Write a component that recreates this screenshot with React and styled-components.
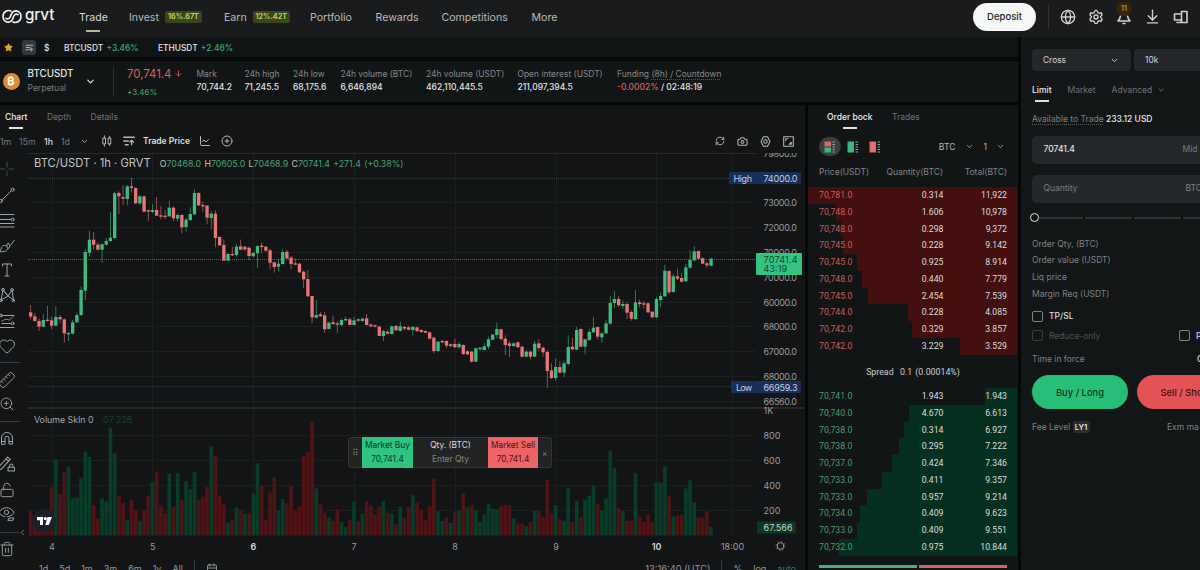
import styled, { createGlobalStyle } from "styled-components";
import {
  ArrowDown,
  ArrowDownToLine,
  Calendar,
  Camera,
  ChartLine,
  ChevronDown,
  ChevronLeft,
  CirclePlus,
  Eye,
  Globe,
  Heart,
  LockOpen,
  RefreshCw,
  Ruler,
  Settings,
  Star,
  Trash2,
  ZoomIn,
} from "lucide-react";

const GlobalStyle = createGlobalStyle`
  * { box-sizing: border-box; }
  body {
    margin: 0;
    background: #050607;
    color: #e4e5e5;
    font-family: Inter, "Liberation Sans", sans-serif;
    overflow: hidden;
  }
  svg { display: block; flex: none; }
`;

const Page = styled.div`
  width: 1200px;
  height: 570px;
  overflow: hidden;
  display: grid;
  grid-template-rows: 37px 533px;
  white-space: nowrap;
`;

/* header */

const Header = styled.header`
  background: #191b1c;
  display: flex;
  align-items: center;
  padding: 0 11px 4px 2px;
`;

const Logo = styled.div`
  display: flex;
  align-items: center;
  gap: 3px;
  width: 77px;
  font-size: 15.2px;
  font-weight: 500;
  line-height: 20px;
  letter-spacing: -0.1px;
  color: #f1f2f2;
`;

const LogoText = styled.span`
  transform: translateY(-2px);
`;

const Nav = styled.nav`
  display: grid;
  grid-template-columns: 50px 95px 86px 65.5px 66px 90px 60px;
  flex: 1;
`;

const NavItem = styled.a`
  display: flex;
  align-items: center;
  height: 33px;
  gap: 6px;
  padding-top: 1px;
  font-size: 10.6px;
  color: ${({ $active }) => ($active ? "#d6d8d8" : "#b9bbbc")};
  position: relative;

  &::after {
    content: "";
    display: ${({ $active }) => ($active ? "block" : "none")};
    position: absolute;
    left: 7px;
    bottom: 1px;
    width: 14px;
    height: 2px;
    background: #a9c28c;
  }
`;

const Badge = styled.span`
  height: 12px;
  line-height: 12px;
  width: 37px;
  text-align: center;
  border-radius: 2px;
  background: #3a4519;
  color: #b9cd6d;
  font-size: 7.2px;
  font-weight: 700;
  margin-top: -1px;
`;

const Deposit = styled.button`
  width: 63px;
  height: 28px;
  border: 0;
  border-radius: 14px;
  background: #f6f7f7;
  color: #222425;
  font: 500 9.5px Inter, sans-serif;
`;

const HeaderIcons = styled.div`
  display: flex;
  align-items: center;
  gap: 12px;
  margin-left: 12px;
  padding-left: 11px;
  height: 24px;
  border-left: 1px solid #303334;
  color: #cfd1d1;
`;

const Bell = styled.div`
  position: relative;
`;

const Count = styled.span`
  position: absolute;
  left: 0;
  top: -7px;
  width: 16px;
  height: 14px;
  border-radius: 7px;
  background: #362509;
  color: #c79431;
  font-size: 7px;
  font-weight: 600;
  line-height: 14px;
  text-align: center;
`;

/* layout under the header */

const Body = styled.main`
  display: grid;
  grid-template-columns: 1018px 1fr;
  gap: 3px;
`;

const Left = styled.div`
  display: grid;
  grid-template-rows: 20px 41px 465px;
  gap: 3.5px;
  min-width: 0;
`;

const Favourites = styled.div`
  background: #111415;
  display: flex;
  align-items: center;
  padding: 1px 0 0 4px;
  font-size: 8.4px;
  font-weight: 500;
`;

const Chip = styled.span`
  width: 14px;
  height: 15px;
  margin: 0 8px 0 9px;
  border-radius: 3px;
  background: #34393d;
  display: flex;
  align-items: center;
  justify-content: center;
`;

const Dollar = styled.span`
  width: 20px;
`;

const Pair = styled.span`
  width: 94px;

  em {
    font-style: normal;
    color: #3fa976;
    margin-left: 1px;
  }
`;

const Instrument = styled.section`
  background: #121516;
  display: flex;
  align-items: center;
`;

const Coin = styled.span`
  width: 17px;
  height: 17px;
  margin-left: 2.5px;
  border-radius: 50%;
  background: #e08c35;
  color: #fff;
  font-size: 11px;
  font-weight: 700;
  line-height: 17px;
  text-align: center;
`;

const Symbol = styled.div`
  margin-left: 8px;
  width: 57.5px;
  font-size: 9.8px;
  font-weight: 500;
  line-height: 14px;

  small {
    display: block;
    font-size: 8.5px;
    font-weight: 400;
    color: #7b7e80;
  }
`;

const LastPrice = styled.div`
  margin-left: 17px;
  padding-left: 13px;
  width: 83.5px;
  height: 29px;
  border-left: 1px solid #2b2e30;
  color: #d9605f;
  font-size: 11.4px;
  line-height: 14px;

  div {
    display: flex;
    align-items: center;
    gap: 3px;
  }

  small {
    display: block;
    margin-top: 4px;
    font-size: 8px;
    color: #3fa976;
  }
`;

const Stats = styled.div`
  display: grid;
  grid-template-columns: 48px 48.5px 47.5px 85.5px 91.5px 99.5px 120px;
`;

const Stat = styled.div`
  font-size: 8.5px;
  font-weight: 500;
  line-height: 13.5px;

  small {
    display: block;
    font-size: 8.45px;
    font-weight: 400;
    color: #85888a;
  }

  u {
    text-decoration: underline dotted #55585a;
    text-underline-offset: 2px;
  }

  em {
    font-style: normal;
    color: #d9605f;
  }
`;

const Work = styled.div`
  display: grid;
  grid-template-columns: 805px 210px;
  gap: 3px;
`;

/* chart panel */

const ChartPanel = styled.section`
  background: #121415;
  display: grid;
  grid-template-rows: 24px 24px 403px 14px;
  overflow: hidden;
`;

const Tabs = styled.div`
  display: flex;
  align-items: center;
  gap: ${({ $gap }) => $gap || 19.5}px;
  padding-left: ${({ $left }) => $left || 5}px;
`;

const Tab = styled.span`
  position: relative;
  font-size: 8.5px;
  font-weight: ${({ $active }) => ($active ? 500 : 400)};
  line-height: 24px;
  color: ${({ $active }) => ($active ? "#eceded" : "#6f7274")};

  &::after {
    content: "";
    display: ${({ $active }) => ($active ? "block" : "none")};
    position: absolute;
    left: calc(50% - 7px);
    bottom: 0;
    width: 14px;
    height: 1.6px;
    background: #dfe0e0;
  }
`;

const ChartTools = styled.div`
  display: flex;
  align-items: center;
  height: 24px;
  font-size: 8.8px;
  color: #b7b9ba;
`;

const Interval = styled.span`
  width: ${({ $w }) => $w}px;
  color: ${({ $active }) => ($active ? "#dedfe0" : "#76797b")};
  font-weight: ${({ $active }) => ($active ? 500 : 400)};
`;

const TradePrice = styled.b`
  font-size: 8.5px;
  font-weight: 600;
  color: #dddfdf;
  margin: 0 9px 0 8px;
`;

const RightTools = styled.div`
  display: flex;
  gap: 12px;
  margin-left: auto;
  padding-right: 11px;
`;

const ChartBody = styled.div`
  display: grid;
  grid-template-columns: 28px 777px;
  position: relative;
`;

const DrawTools = styled.div`
  display: flex;
  flex-direction: column;
  height: 403px;
  color: #a0a3a5;
`;

const DrawTool = styled.span`
  height: ${({ $h }) => $h}px;
  flex: none;
  display: flex;
  align-items: center;
  padding-left: ${({ $x }) => $x || 0}px;
  margin-left: -2px;
`;

const Rule = styled.i`
  display: block;
  flex: none;
  width: 20px;
  height: 1px;
  background: #3a3d3f;
`;

const Flipped = styled.span`
  transform: scaleX(-1);
`;

const Legend = styled.div`
  position: absolute;
  left: 34px;
  top: 3px;
  display: flex;
  align-items: baseline;
  gap: 9px;
  font-size: 11.2px;
  line-height: 15px;
  color: #c2c4c5;
`;

const Ohlc = styled.span`
  font-size: 8.8px;
  word-spacing: 0.8px;

  em {
    font-style: normal;
    color: #45a478;
  }
`;

const VolumeLegend = styled.div`
  position: absolute;
  left: 34px;
  top: 261px;
  font-size: 8.8px;
  line-height: 12px;
  color: #a5a8a9;

  em {
    font-style: normal;
    margin-left: 7px;
    color: #17412f;
  }
`;

const TvMark = styled.div`
  position: absolute;
  left: 33px;
  top: 356px;
  width: 23px;
  height: 23px;
  border-radius: 50%;
  background: #191f2b;
  display: flex;
  align-items: center;
  justify-content: center;
`;

const QuickTrade = styled.div`
  position: absolute;
  left: 348px;
  top: 284px;
  width: 204px;
  height: 31px;
  border: 1px solid #343535;
  border-radius: 3px;
  background: #222323;
  display: grid;
  grid-template-columns: 13px 51px 75px 50px 13px;
  grid-template-rows: 29px;
  align-items: center;
  text-align: center;
  font-size: 8.5px;
  color: #77797a;
`;

const QuickCell = styled.div`
  height: 31px;
  margin: -1px 0;
  padding-top: 1px;
  line-height: 14px;
  font-size: 8.35px;
  background: ${({ $bg }) => $bg || "transparent"};
  color: ${({ $fg }) => $fg};

  span {
    color: #85888a;
  }
`;

const RangeBar = styled.div`
  display: flex;
  padding: 7px 9px 0 39px;
  gap: 11px;
  font-size: 9px;
  line-height: 12px;
  color: #96999a;
`;

const Bar = styled.i`
  width: 1px;
  height: 14px;
  margin-top: -3px;
  background: #393c3e;
`;

const Clock = styled.span`
  margin-left: auto;
  font-size: 9.3px;
`;

const Auto = styled.span`
  color: #2c8059;
`;

/* order book */

const Book = styled.section`
  background: #121516;
  overflow: hidden;
`;

const BookTools = styled.div`
  height: 35px;
  display: flex;
  align-items: center;
  padding: 0 13px 0 11px;
  font-size: 8.6px;
  color: #b3b5b6;
`;

const ModeButton = styled.span`
  width: 22px;
  height: 19px;
  border-radius: 10px;
  background: ${({ $active }) => ($active ? "#3b3e3f" : "transparent")};
  display: flex;
  align-items: center;
  justify-content: center;

  & + & {
    margin-left: 0.5px;
  }
`;

const BookUnit = styled.span`
  margin-left: auto;
  display: flex;
  align-items: center;
  gap: 9px;

  & + & {
    margin-left: 10px;
  }
`;

const BookHead = styled.div`
  display: grid;
  grid-template-columns: 61px 63px 64px;
  padding-left: 11px;
  height: 23px;
  line-height: 16px;
  text-align: right;
  font-size: 8.5px;
  color: #808385;

  span:first-child {
    text-align: left;
  }
`;

const BookRow = styled.div`
  display: grid;
  grid-template-columns: 61px 63.5px 63.5px;
  padding-left: 11px;
  height: 16.75px;
  line-height: 16.5px;
  text-align: right;
  font-family: Roboto, sans-serif;
  font-size: 8.7px;
  color: #dcdddd;
  background: linear-gradient(${({ $side }) => ($side === "ask" ? "#430f0f, #430f0f" : "#05301f, #05301f")})
    right 1px top 0 / ${({ $depth }) => $depth}px 100% no-repeat;

  span:first-child {
    text-align: left;
    color: ${({ $side }) => ($side === "ask" ? "#cf5d5a" : "#4b9c72")};
  }
`;

const Spread = styled.div`
  height: 33.5px;
  line-height: 35px;
  text-align: center;
  font-family: Roboto, sans-serif;
  font-size: 8.8px;
  color: #cccece;
  word-spacing: 1px;
`;

const Ratio = styled.div`
  display: grid;
  grid-template-columns: 98px 88px;
  gap: 2px;
  margin: 9.5px 11px 0;

  i {
    height: 3px;
    background: #4caf7c;
  }

  i:last-child {
    background: #d06468;
  }
`;

/* order form */

const Form = styled.aside`
  background: #131617;
  padding: 12px 0 0 11px;
  overflow: hidden;
  font-size: 8.5px;
  color: #7e8183;
`;

const Selects = styled.div`
  display: grid;
  grid-template-columns: 99px 99px;
  gap: 3px;
`;

const Select = styled.div`
  height: 22px;
  border-radius: 4px;
  background: #24282b;
  padding: 0 12px 0 11px;
  display: flex;
  align-items: center;
  justify-content: space-between;
  font-size: 8.4px;
  color: #d2d4d5;
`;

const FormTabs = styled.div`
  display: flex;
  align-items: center;
  gap: 16px;
  margin-top: 7px;
  color: #777a7c;
`;

const MoreTab = styled.div`
  display: flex;
  align-items: center;
  gap: 5px;
`;

const Available = styled.div`
  margin-top: 11px;
  line-height: 13px;
  height: 12px;

  span {
    text-decoration: underline dotted #5c5f61;
    text-underline-offset: 2px;
  }

  b {
    font-weight: 500;
    color: #e8e9e9;
  }
`;

const Field = styled.div`
  width: 195px;
  height: 27.5px;
  margin-top: ${({ $mt }) => $mt}px;
  border-radius: 5px;
  background: #24282b;
  display: grid;
  grid-template-columns: ${({ $unit }) => $unit}px 1fr;
  padding-left: 11.5px;
  line-height: 27px;
  color: #7a7d7f;

  b {
    font-weight: 500;
    color: #e3e4e5;
  }
`;

const Slider = styled.div`
  height: 9px;
  width: 210px;
  margin-top: 10.5px;
  display: flex;
  align-items: center;
`;

const Knob = styled.i`
  width: 9px;
  height: 9px;
  margin-left: -2px;
  border: 1.8px solid #e2e3e3;
  border-radius: 50%;
`;

const Track = styled.i`
  flex: 1;
  height: 2px;
  background: repeating-linear-gradient(90deg, #313437 0 44px, #0c0d0e 44px 46px, #313437 46px 49px);
`;

const Summary = styled.div`
  margin-top: 13.5px;
  height: 66.8px;
  line-height: 16.8px;
`;

const Check = styled.label`
  display: flex;
  align-items: center;
  gap: 6px;
  color: ${({ $dim }) => ($dim ? "#505355" : "#dbdcdd")};
  font-weight: ${({ $dim }) => ($dim ? 400 : 500)};

  i {
    width: 11px;
    height: 11px;
    border: 1px solid ${({ $dim }) => ($dim ? "#3b3e40" : "#808385")};
    border-radius: 2px;
  }
`;

const CheckRow = styled.div`
  display: grid;
  grid-template-columns: 147px 60px;
  height: 19.7px;
  align-items: center;
  margin-top: ${({ $mt }) => $mt || 0}px;
`;

const Force = styled.div`
  display: grid;
  grid-template-columns: 165px 40px;
  margin-top: 7px;
  line-height: 13px;

  b {
    font-weight: 500;
    color: #dbdcdd;
  }
`;

const Actions = styled.div`
  display: grid;
  grid-template-columns: 96px 96px;
  gap: 9px;
  margin-top: 9.5px;
`;

const Action = styled.button`
  height: 34px;
  border: 0;
  border-radius: 17px;
  background: ${({ $sell }) => ($sell ? "#e35355" : "#27be77")};
  color: ${({ $sell }) => ($sell ? "#3f1012" : "#0b3a25")};
  font: 500 9.4px Inter, sans-serif;
  padding: 0;
`;

const Fee = styled.div`
  display: grid;
  grid-template-columns: 40.5px 17px 1fr;
  align-items: center;
  margin-top: 11px;
  height: 13px;

  b {
    line-height: 12px;
    text-align: center;
    border-radius: 2px;
    background: #2a2c2e;
    color: #e0e1e1;
    font-size: 7.8px;
    font-weight: 600;
  }

  span {
    margin-left: 77.5px;
  }
`;

// One candle per entry: colour, high, top, bottom, low (thirds of a pixel).
const CANDLES = `
r465,487,500,508 r490,499,513,515 r505,513,530,543 g492,510,530,532 r468,509,512,515 r500,511,527,538
g468,501,527,528 r495,501,508,520 r505,508,550,578 g545,549,553,573 g510,517,551,553 g487,495,517,519
g410,420,495,497 g298,306,422,450 g242,269,308,320 r246,269,284,300 r278,284,299,302 g280,283,299,338
g264,273,284,287 g186,263,273,276 g125,130,264,266 r124,129,139,192 r105,141,146,165 g105,109,147,167
r84,109,114,127 r112,114,160,162 g135,139,160,165 r137,139,185,187 r178,181,185,212 g163,180,186,190
r141,180,197,198 r168,196,199,208 r180,197,200,208 g152,173,199,200 r168,173,205,214 g190,195,206,215
r193,195,232,250 g203,209,231,245 g172,192,210,213 g118,129,193,195 r127,129,166,168 r155,165,169,185
r165,167,203,223 g183,191,204,238 r181,191,264,292 r259,261,286,287 r268,285,332,333 g309,312,332,333
r290,312,316,318 g282,290,315,320 r269,289,299,300 r287,290,298,303 r290,293,318,330 g305,309,319,322
g286,288,310,353 r277,287,291,310 r288,290,302,306 r296,301,338,358 r335,337,351,368 g328,341,350,363
g298,306,342,344 r300,305,325,328 r318,323,342,358 r325,340,344,346 r339,341,367,369 r362,365,388,415
r360,387,439,441 r437,438,502,520 g450,495,503,504 r487,493,499,501 r485,496,538,549 g515,518,537,538
r497,517,522,525 r514,520,523,548 g506,510,525,528 g499,507,511,513 r503,508,525,526 g500,511,525,527
r505,508,512,515 g503,506,513,515 r492,505,525,526 r520,524,529,532 r524,526,530,532 r527,530,558,558
g540,543,558,573 r541,545,551,553 g527,529,552,553 r525,528,541,543 g515,529,543,544 r528,531,536,541
r528,532,539,542 g528,531,540,557 r530,532,543,546 r538,540,546,549 r541,543,548,550 r545,547,566,568
r560,563,603,610 g573,575,603,605 r570,573,577,580 r571,573,587,595 r580,583,588,592 r566,582,592,594
g576,582,592,595 r583,585,612,615 r600,604,613,615 r603,605,635,638 g592,595,635,636 g591,593,598,600
g580,589,600,602 g560,568,590,597 g552,554,569,571 g517,537,555,565 r536,538,567,572 r556,566,585,615
r572,580,588,620 g577,580,588,591 r575,577,592,594 r588,590,620,622 g600,605,620,622 r602,605,620,628
g572,581,620,622 r568,580,594,603 r590,593,607,620 r600,606,663,713 r640,661,684,687 g625,651,684,693
r634,651,668,670 g632,640,668,682 g556,591,642,645 r563,590,598,601 g530,540,599,601 r536,537,590,592
g566,568,590,613 g537,546,570,573 g500,533,547,549 r530,531,560,568 g546,550,562,578 g510,520,550,553
g438,459,521,524 g423,447,459,475 r437,447,466,470 g451,462,468,476 r457,462,488,508 r482,486,506,512
g420,457,507,509 r449,457,462,472 r453,460,464,475 r457,460,487,489 r484,485,502,503 g440,447,502,504
g427,438,450,472 g344,362,439,441 r361,363,427,433 g372,379,426,428 r356,379,386,390 r368,384,395,397
g341,352,394,396 g302,330,353,356 g288,304,331,334 r302,303,326,328 r322,325,341,343 r336,340,346,353
g323,326,347,350`
  .trim()
  .split(/\s+/)
  .map((c) => [c[0], ...c.slice(1).split(",").map(Number)]);

// Bar height in thirds of a pixel, in candle order.
const VOLUMES = `
r74 r50 r42 r44 r52 r146 g228 r124 r190 g206 g114 g114 g173 g252 g236 r90 r51 g111 g104 g324 g246 r119
r98 g48 r106 r76 g43 r76 r119 g161 r190 r90 r66 g186 r86 g188 r106 g163 g139 g190 r106 r116 r146 g268
r239 r119 r94 g38 r48 g84 r76 g66 r66 g126 g216 r148 r48 r129 r175 g76 g109 r96 r148 r76 r88 r238 r251
r343 g141 r94 r69 g54 r44 r78 g41 g26 r46 g101 r43 g66 r103 r90 r64 r86 g104 r69 g66 r34 g86 r54 r86
g121 r99 r78 r46 r88 r171 g73 g44 r54 g38 r69 g76 r126 g86 r91 g76 g41 g64 g94 g81 g79 r89 r91 r91 g51
r36 r36 g28 r41 g74 r74 r56 r168 r66 g91 r48 g44 g143 r41 g104 r54 g108 g119 g149 r95 g76 g111 g254
g204 r83 g73 r44 r44 g187 r56 r41 r63 r41 g161 g159 g208 r118 g58 r61 r61 g141 g166 g99 r54 r54 r73 g26`
  .trim()
  .split(/\s+/)
  .map((v) => [v[0], Number(v.slice(1))]);

const DAYS = [
  ["4", 52],
  ["5", 152.7],
  ["6", 253.3, true],
  ["7", 354],
  ["8", 455],
  ["9", 556],
  ["10", 656.7, true],
  ["18:00", 732.5],
];

const PRICES = [
  ["79800.0", 153.5],
  ["73000.0", 202.5],
  ["72000.0", 227.3],
  ["70000.0", 252],
  ["70000.0", 277.3],
  ["60000.0", 302],
  ["68000.0", 326.5],
  ["67000.0", 351.3],
  ["68000.0", 376.3],
  ["66560.0", 401.3],
];

const VOLUME_TICKS = [
  ["1K", 410.5],
  ["800", 435.5],
  ["600", 460.2],
  ["400", 485.5],
  ["200", 510.5],
];

const ASKS = [
  ["70,781.0", "0.314", "11,922", 210],
  ["70,748.0", "1.606", "10,978", 181],
  ["70,748.0", "0.298", "9,372", 176],
  ["70,745.0", "0.228", "9.142", 174],
  ["70,745.0", "0.925", "8.914", 160],
  ["70,748.0", "0.440", "7.779", 155],
  ["70,745.0", "2.454", "7.539", 149],
  ["70,744.0", "0.228", "4.085", 109],
  ["70,742.0", "0.329", "3.857", 105],
  ["70,742.0", "3.229", "3.529", 57],
];

const BIDS = [
  ["70,741.0", "1.943", "1.943", 32],
  ["70,740.0", "4.670", "6.613", 108],
  ["70,738.0", "0.314", "6.927", 113],
  ["70,738.0", "0.295", "7.222", 118],
  ["70,737.0", "0.424", "7.346", 125],
  ["70,733.0", "0.411", "9.357", 135],
  ["70,733.0", "0.957", "9.214", 150],
  ["70,734.0", "0.409", "9.623", 157],
  ["70,733.0", "0.409", "9.551", 160],
  ["70,732.0", "0.975", "10.844", 178],
];

const Stroke = ({ size = 16, w = 1, children }) => (
  <svg
    width={size}
    height={size}
    viewBox="0 0 16 16"
    fill="none"
    stroke="currentColor"
    strokeWidth={w}
    strokeLinecap="round"
    strokeLinejoin="round"
  >
    {children}
  </svg>
);

const PriceChart = () => (
  <svg width="777" height="403" viewBox="28 153 777 403" fontFamily="Inter, sans-serif" fontSize="9">
    <g stroke="#1b1f20">
      {PRICES.slice(1).map(([, y]) => (
        <path key={y} d={`M28 ${Math.floor(y)}.5H756`} />
      ))}
      {VOLUME_TICKS.slice(1).map(([, y]) => (
        <path key={y} d={`M28 ${Math.floor(y)}.5H754`} />
      ))}
      {DAYS.map(([d, x]) => (
        <path key={d} d={`M${Math.floor(x)}.5 153V536`} />
      ))}
    </g>
    <path d="M28 153.5H756" stroke="#25292a" />
    <path d="M28 408H805" stroke="#2b2f30" strokeWidth="1.3" />
    <path d="M28 178.4H730" stroke="#3a4845" strokeDasharray="1 1" />
    <path d="M28 259.5H756" stroke="#4a665a" strokeDasharray="1 1" />
    <path d="M28 386.7H732" stroke="#3b4042" strokeDasharray="1 1" />

    <g transform="translate(0 535.5) scale(0.33333)">
      {VOLUMES.map(([c, h], i) => (
        <rect key={i} x={86.5 + 12.6 * i} y={-h} width="11" height={h} fill={c === "g" ? "#083d2a" : "#501416"} />
      ))}
    </g>
    <g transform="translate(0 150) scale(0.33333)">
      {CANDLES.map(([c, high, top, bottom, low], i) => {
        const x = 92 + 12.6 * i;
        return (
          <g key={i} fill={c === "g" ? "#3dbb80" : "#e77677"}>
            <rect x={x - 1.2} y={high} width="2.4" height={low - high} opacity="0.75" />
            <rect x={x - 5} y={top} width="10" height={Math.max(bottom - top, 4)} />
          </g>
        );
      })}
    </g>

    <g fill="#9a9d9f" dominantBaseline="central">
      {PRICES.map(([p, y], i) => (
        <text key={i} x="763.5" y={y} textLength="33.5">
          {p}
        </text>
      ))}
      {VOLUME_TICKS.map(([v, y]) => (
        <text key={v} x="763.5" y={y}>
          {v}
        </text>
      ))}
      {DAYS.map(([d, x, bold]) => (
        <text key={d} x={x} y="546.5" textAnchor="middle" fontWeight={bold ? 600 : 400} fill={bold ? "#d5d7d7" : "#9a9d9f"}>
          {d}
        </text>
      ))}
    </g>
    <rect x="729" y="172" width="72" height="12" rx="1" fill="#182f5c" />
    <rect x="731" y="381" width="70" height="12" rx="1" fill="#182f5c" />
    <rect x="756" y="253" width="46" height="22" rx="1" fill="#35c47f" />
    <rect x="757" y="521.5" width="39" height="12" rx="1" fill="#0a3826" />
    <g dominantBaseline="central" fill="#c6cede">
      <text x="733.5" y="178.3" textLength="18.5">High</text>
      <text x="763.5" y="178.3" textLength="34">74000.0</text>
      <text x="736" y="387.6" textLength="16">Low</text>
      <text x="763.5" y="387.6" textLength="34">66959.3</text>
      <text x="763.5" y="259.2" textLength="34" fill="#0f4a2d">70741.4</text>
      <text x="763.5" y="268.9" textLength="23.5" fill="#0f4a2d">43:19</text>
      <text x="763.5" y="527.6" textLength="29" fill="#c5d6cd">67.566</text>
    </g>
    <g fill="none" stroke="#9a9d9f">
      <circle cx="780.5" cy="546" r="3.3" />
      <circle cx="780.5" cy="546" r="4.4" strokeDasharray="1.2 2.25" />
    </g>
  </svg>
);

const DrawingTools = () => (
  <DrawTools>
    <DrawTool $h={31} $x={1}>
      <Stroke><path d="M8 1v5M8 10v5M1 8h5M10 8h5" stroke="#2e5a48" /></Stroke>
    </DrawTool>
    <DrawTool $h={22} $x={1}>
      <Stroke><path d="m3 13 9.5-9.5" /><circle cx="13.6" cy="2.7" r="1.5" /><circle cx="1.8" cy="14" r="1.5" /></Stroke>
    </DrawTool>
    <DrawTool $h={27} $x={1}>
      <Stroke><path d="M0 2.5h15M0 7.5h12M0 11.5h15M0 15h15" /><circle cx="13.8" cy="7.5" r="1.5" /></Stroke>
    </DrawTool>
    <DrawTool $h={25} $x={1}>
      <Stroke><path d="M0 13.5c2-.5 2-2 2.500-4 .8-2.500 5-3 6 0 .8 3-2.500 5-8.500 4zM8 8c-.5-2 .5-3 2-2.500 0 2 1 2.500 2 1L15.500 2M9 11l2-3" /></Stroke>
    </DrawTool>
    <DrawTool $h={24} $x={1}>
      <Stroke><path d="M3.500 4V2h9v2M8 2v12M6 14h4" /></Stroke>
    </DrawTool>
    <DrawTool $h={26} $x={1}>
      <Stroke>
        <path d="m2 13 2-10 5 6 4-6 1.500 10M2 13l7-4 5.500 4M4 3l5 6" />
        <circle cx="2" cy="13.500" r="1.300" />
        <circle cx="4" cy="2.600" r="1.300" />
        <circle cx="13" cy="2.800" r="1.300" />
        <circle cx="14.300" cy="13.500" r="1.300" />
      </Stroke>
    </DrawTool>
    <DrawTool $h={25} $x={1}>
      <Stroke>
        <path d="M3 2.500h12M3 10.500h9M0 14.500h15" />
        <path d="m3 8 4-2 3 1 4-3" strokeDasharray="1.500 1.500" />
        <circle cx="2" cy="2.500" r="1.400" />
        <circle cx="13.700" cy="10.500" r="1.400" />
      </Stroke>
    </DrawTool>
    <DrawTool $h={25}><Heart size={18} strokeWidth={1.300} /></DrawTool>
    <DrawTool $h={4} />
    <Rule />
    <DrawTool $h={34}><Flipped><Ruler size={18} strokeWidth={1.200} /></Flipped></DrawTool>
    <DrawTool $h={14} $x={1}><ZoomIn size={16} strokeWidth={1.400} /></DrawTool>
    <DrawTool $h={10} />
    <Rule />
    <DrawTool $h={4} />
    <DrawTool $h={24} $x={1}>
      <Stroke><path d="M2.500 14V8a5.500 5.500 0 0 1 11 0v6H10V8.200a2 2 0 0 0-4 0V14zM2.500 11.500H6M10 11.500h3.500" /></Stroke>
    </DrawTool>
    <DrawTool $h={26}>
      <Stroke size={17}>
        <path d="M0 12 9 2l2.500 2.200L3 13.500 0 14zM7.500 3.700 10 6M9.500 11.500h6V15h-6zM11 11.500V10a1.500 1.500 0 0 1 3 0v1.500" />
      </Stroke>
    </DrawTool>
    <DrawTool $h={27} $x={1}><LockOpen size={16} strokeWidth={1.400} /></DrawTool>
    <DrawTool $h={20} $x={1}>
      <Stroke>
        <path d="M0 7.500C3.500 1 11.500 1 15 7.500 13.500 10 11 11.500 8.500 11.800M6 11.800C3.500 11.300 1.500 10 0 7.500M9 15l1-2h5l-1 2z" />
        <circle cx="7.500" cy="7.300" r="2.200" />
      </Stroke>
    </DrawTool>
    <DrawTool $h={9} />
    <Rule />
    <DrawTool $h={32} $x={1}><Trash2 size={16} strokeWidth={1.400} /></DrawTool>
  </DrawTools>
);

const Collapse = styled.span`
  position: absolute;
  left: 18px;
  top: 375px;
  color: #8d9092;
`;

const BookMode = ({ top, bottom }) => (
  <svg width="12" height="12" viewBox="0 0 12 12">
    <rect x="0.500" y="0.500" width="6.500" height={bottom ? 5 : 11} fill={top} />
    {bottom && <rect x="0.500" y="6.500" width="6.500" height="5" fill={bottom} />}
    <path d="M8.500 1h2.500M8.500 3.500h2.500M8.500 6h2.500M8.500 8.500h2.500M8.500 11h2.500" stroke="#9da0a0" />
  </svg>
);

const App = () => (
  <Page>
    <GlobalStyle />
    <Header>
      <Logo>
        <svg width="20" height="15" viewBox="0 0 20 15" fill="none" stroke="#f1f2f2" strokeWidth="1.600" strokeLinecap="round">
          <path d="M9 2C5 .5 1 3 1 7.500s4 6.800 7.500 5c3-1.500 2-4.500 4-6.500 1-1 2.500-1 3.500-.3" />
          <path d="M11 13c4 1.500 8-1 8-5.500s-4-6.800-7.500-5c-3 1.500-2 4.500-4 6.500-1 1-2.500 1-3.500.3" />
        </svg>
        <LogoText>grvt</LogoText>
      </Logo>
      <Nav>
        <NavItem $active>Trade</NavItem>
        <NavItem>Invest <Badge>16%.67T</Badge></NavItem>
        <NavItem>Earn <Badge>12%.42T</Badge></NavItem>
        <NavItem>Portfolio</NavItem>
        <NavItem>Rewards</NavItem>
        <NavItem>Competitions</NavItem>
        <NavItem>More</NavItem>
      </Nav>
      <Deposit>Deposit</Deposit>
      <HeaderIcons>
        <Globe size={16} strokeWidth={2} />
        <Settings size={16} strokeWidth={2.100} />
        <Bell>
          <Stroke w={1.600}><path d="M4.500 7 3.500 10 2 12h12l-1.500-2-1-3M7 14.500h2" /></Stroke>
          <Count>11</Count>
        </Bell>
        <ArrowDownToLine size={17} strokeWidth={2} />
        <Stroke w={1.600}><path d="M1.500 5h7v6h-7zM8.500 2.500H14v11H8.500zM4 13.500h4" /></Stroke>
      </HeaderIcons>
    </Header>

    <Body>
      <Left>
        <Favourites>
          <Star size={9} fill="#e3a13c" stroke="#e3a13c" />
          <Chip>
            <Stroke size={9} w={1.800}><path d="M2 4h12M2 8h6M2 12h4M11 8v6M8 11h6" stroke="#aeb3b5" /></Stroke>
          </Chip>
          <Dollar>$</Dollar>
          <Pair>BTCUSDT <em>+3.46%</em></Pair>
          <Pair>ETHUSDT <em>+2.46%</em></Pair>
        </Favourites>

        <Instrument>
          <Coin>₿</Coin>
          <Symbol>BTCUSDT<small>Perpetual</small></Symbol>
          <ChevronDown size={11} strokeWidth={2.600} />
          <LastPrice>
            <div>70,741.4 <ArrowDown size={9} strokeWidth={2.200} /></div>
            <small>+3.46%</small>
          </LastPrice>
          <Stats>
            <Stat><small>Mark</small>70,744.2</Stat>
            <Stat><small>24h high</small>71,245.5</Stat>
            <Stat><small>24h low</small>68,175.6</Stat>
            <Stat><small>24h volume (BTC)</small>6,646,894</Stat>
            <Stat><small>24h volume (USDT)</small>462,110,445.5</Stat>
            <Stat><small>Open interest (USDT)</small>211,097,394.5</Stat>
            <Stat><small>Funding <u>(8h) / Countdown</u></small><em>-0.0002%</em> / 02:48:19</Stat>
          </Stats>
        </Instrument>

        <Work>
          <ChartPanel>
            <Tabs>
              <Tab $active>Chart</Tab>
              <Tab>Depth</Tab>
              <Tab>Details</Tab>
            </Tabs>
            <ChartTools>
              <Interval $w={19}>1m</Interval>
              <Interval $w={25}>15m</Interval>
              <Interval $w={17} $active>1h</Interval>
              <Interval $w={18.500}>1d</Interval>
              <ChevronDown size={9} strokeWidth={2.400} />
              <Interval $w={12} />
              <Stroke size={12} w={1.300}><path d="M3 4h3v8H3zM10 4h3v8h-3zM4.500 1v3M4.500 12v3M11.500 2v2M11.500 12v2" /></Stroke>
              <Interval $w={10.500} />
              <Stroke size={12} w={1.700}><path d="M1 3h14M1 8h6M3 13h4M11.500 13V7M9 9.500 11.500 7 14 9.500" /></Stroke>
              <TradePrice>Trade Price</TradePrice>
              <ChartLine size={12} strokeWidth={2} />
              <Interval $w={10} />
              <CirclePlus size={12} strokeWidth={2} />
              <RightTools>
                <RefreshCw size={10} strokeWidth={2.200} />
                <Camera size={11} strokeWidth={2.200} />
                <Stroke size={11} w={1.500}><path d="m5 1-3.500 7L5 15h6l3.500-7L11 1z" /><circle cx="8" cy="8" r="2.500" /></Stroke>
                <Stroke size={11} w={1.500}><path d="M1 1h14v14H1zM4 7V4h3M9 12h3V9z" /></Stroke>
              </RightTools>
            </ChartTools>
            <ChartBody>
              <DrawingTools />
              <PriceChart />
              <Collapse><ChevronLeft size={9} strokeWidth={2} /></Collapse>
              <Legend>
                BTC/USDT · 1h · GRVT
                <Ohlc>
                  O<em>70468.0</em> H<em>70605.0</em> L<em>70468.9</em> C<em>70741.4 +271.4 (+0.38%)</em>
                </Ohlc>
              </Legend>
              <VolumeLegend>Volume SkIn 0 <em>07 236</em></VolumeLegend>
              <TvMark>
                <svg width="15" height="8" viewBox="0 0 15 8" fill="#fff">
                  <path d="M0 0h6v8H3V3.200H0zM10.500 0H15l-3.300 8H8.300z" />
                  <circle cx="8.300" cy="1.600" r="1.600" />
                </svg>
              </TvMark>
              <QuickTrade>
                <span>⠿</span>
                <QuickCell $bg="#2fc480" $fg="#0b3c26">Market Buy<br />70,741.4</QuickCell>
                <QuickCell $fg="#dedfdf">Qty. (BTC)<br /><span>Enter Qty</span></QuickCell>
                <QuickCell $bg="#ee6365" $fg="#4a1315">Market Sell<br />70,741.4</QuickCell>
                <span>×</span>
              </QuickTrade>
            </ChartBody>
            <RangeBar>
              <span>1d</span><span>5d</span><span>1m</span><span>3m</span><span>6m</span><span>1y</span><span>All</span>
              <Bar />
              <Calendar size={12} strokeWidth={1.800} />
              <Clock>13:16:40 (UTC)</Clock>
              <Bar />
              <span>%</span><span>log</span><Auto>auto</Auto>
            </RangeBar>
          </ChartPanel>

          <Book>
            <Tabs $left={19}>
              <Tab $active>Order bock</Tab>
              <Tab>Trades</Tab>
            </Tabs>
            <BookTools>
              <ModeButton $active><BookMode top="#d8696b" bottom="#3bb681" /></ModeButton>
              <ModeButton><BookMode top="#3bb681" /></ModeButton>
              <ModeButton><BookMode top="#e56b6c" /></ModeButton>
              <BookUnit>BTC <ChevronDown size={9} /></BookUnit>
              <BookUnit>1 <ChevronDown size={9} /></BookUnit>
            </BookTools>
            <BookHead><span>Price(USDT)</span><span>Quantity(BTC)</span><span>Total(BTC)</span></BookHead>
            {ASKS.map(([price, qty, total, depth], i) => (
              <BookRow key={i} $side="ask" $depth={depth}>
                <span>{price}</span><span>{qty}</span><span>{total}</span>
              </BookRow>
            ))}
            <Spread>Spread&nbsp; 0.1 (0.00014%)</Spread>
            {BIDS.map(([price, qty, total, depth], i) => (
              <BookRow key={i} $side="bid" $depth={depth}>
                <span>{price}</span><span>{qty}</span><span>{total}</span>
              </BookRow>
            ))}
            <Ratio><i /><i /></Ratio>
          </Book>
        </Work>
      </Left>

      <Form>
        <Selects>
          <Select>Cross <ChevronDown size={9} strokeWidth={2.400} /></Select>
          <Select>10k</Select>
        </Selects>
        <FormTabs>
          <Tab $active>Limit</Tab>
          <Tab>Market</Tab>
          <MoreTab><Tab>Advanced</Tab><ChevronDown size={8} strokeWidth={2.400} /></MoreTab>
        </FormTabs>
        <Available><span>Available to Trade</span> <b>233.12 USD</b></Available>
        <Field $mt={11} $unit={139}><b>70741.4</b>Mid</Field>
        <Field $mt={11.500} $unit={142}><span>Quantity</span>BTC</Field>
        <Slider><Knob /><Track /></Slider>
        <Summary>
          <div>Order Qty, (BTC)</div>
          <div>Order value (USDT)</div>
          <div>Liq price</div>
          <div>Margin Req (USDT)</div>
        </Summary>
        <CheckRow $mt={4}><Check><i />TP/SL</Check></CheckRow>
        <CheckRow>
          <Check $dim><i />Reduce-only</Check>
          <Check><i />Post</Check>
        </CheckRow>
        <Force>Time in force <b>GTC</b></Force>
        <Actions>
          <Action>Buy / Long</Action>
          <Action $sell>Sell / Short</Action>
        </Actions>
        <Fee>Fee Level <b>LY1</b><span>Exm ma</span></Fee>
      </Form>
    </Body>
  </Page>
);

export default App;
